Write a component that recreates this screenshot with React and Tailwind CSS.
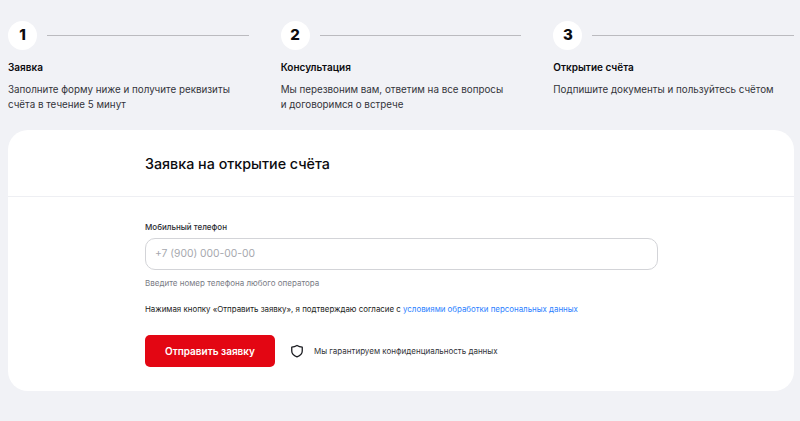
import React from 'react';

const steps = [
  { n: 1, title: 'Заявка', text: ['Заполните форму ниже и получите реквизиты', 'счёта в течение 5 минут'] },
  { n: 2, title: 'Консультация', text: ['Мы перезвоним вам, ответим на все вопросы', 'и договоримся о встрече'] },
  { n: 3, title: 'Открытие счёта', text: ['Подпишите документы и пользуйтесь счётом'] },
];

export default function App() {
  return (
    <div className="min-h-[421px] bg-[#f1f2f6] pl-2 pr-[6px] pt-[21px] font-['Inter',sans-serif] text-[#0b0b0f]">
      <div className="grid grid-cols-3 gap-8">
        {steps.map((s) => (
          <div key={s.n}>
            <div className="flex items-center gap-[10px]">
              <div className="flex h-[29px] w-[29px] items-center justify-center rounded-full bg-white text-[15px] font-extrabold">
                {s.n}
              </div>
              <div className="h-px flex-1 bg-[#bbbbbf]" />
            </div>
            <div className="mt-[10px] text-[10px] leading-[14px] font-semibold">{s.title}</div>
            <div className="mt-[8px] h-[29px] text-[9.8px] leading-[15px] text-[#33343a]">
              {s.text.map((t) => (
                <div key={t}>{t}</div>
              ))}
            </div>
          </div>
        ))}
      </div>

      <div className="mt-[19px] h-[261px] rounded-[20px] bg-white">
        <div className="h-[67px] border-b border-[#eeeff3] pl-[137px] pt-6">
          <h1 className="text-[14.3px] leading-5 font-medium">Заявка на открытие счёта</h1>
        </div>
        <div className="pl-[137px] pt-[25px]">
          <label className="block text-[8px] leading-[11px] font-medium text-[#2c2d33]">Мобильный телефон</label>
          <div className="mt-[5px] flex h-8 w-[513px] items-center rounded-[10px] border border-[#d3d4d8] pl-[9px] text-[10.3px] text-[#a6a8ae]">
            +7 (900) 000-00-00
          </div>
          <div className="mt-[8px] text-[8px] leading-[11px] text-[#7a7c85]">Введите номер телефона любого оператора</div>
          <div className="mt-[15px] text-[7.9px] leading-[11px] text-[#1b1c21]">
            Нажимая кнопку «Отправить заявку», я подтверждаю согласие с{' '}
            <a href="#" className="text-[#2b7fff]">условиями обработки персональных данных</a>
          </div>
          <div className="mt-[20px] flex items-center">
            <button className="h-8 w-[130px] rounded-[5px] bg-[#e30613] text-[10px] font-semibold text-white">
              Отправить заявку
            </button>
            <svg className="ml-[15px] h-[14px] w-[14px]" viewBox="0 0 24 24" fill="none" stroke="#1a1b20" strokeWidth="2.2" strokeLinejoin="round">
              <path d="M12 2.500c3 1.800 6 2.700 9 3v6.500c0 4.800-3.400 8-9 10-5.600-2-9-5.200-9-10V5.500c3-.3 6-1.200 9-3z" />
            </svg>
            <span className="ml-[10px] text-[8px] text-[#33343a]">Мы гарантируем конфиденциальность данных</span>
          </div>
        </div>
      </div>
    </div>
  );
}
